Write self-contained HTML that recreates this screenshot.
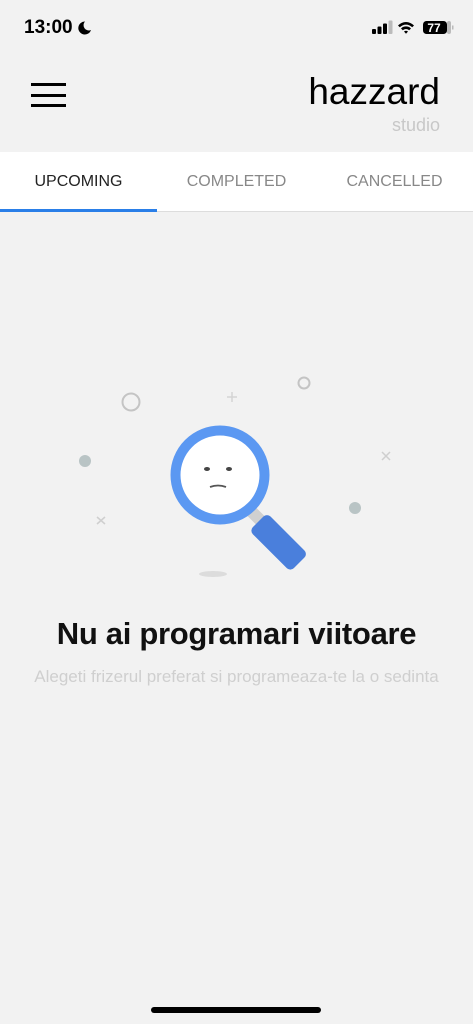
<!DOCTYPE html>
<html><head><meta charset="utf-8"><style>
*{margin:0;padding:0;box-sizing:border-box}
body{width:473px;height:1024px;background:#f2f2f2;font-family:"Liberation Sans",sans-serif;position:relative;overflow:hidden}
.a{position:absolute}
</style></head><body>
<div class="a" style="left:24px;top:17px;font-size:19px;font-weight:bold;color:#000">13:00</div>
<svg class="a" style="left:76px;top:20px" width="16" height="16" viewBox="0 0 16 16"><path d="M9 1.5A6.5 6.5 0 1 0 15 10 5.3 5.3 0 0 1 9 1.5z" fill="#000"/></svg>
<svg class="a" style="left:370px;top:18px" width="90" height="20" viewBox="0 0 90 20">
<rect x="2" y="11" width="4" height="5" rx="1" fill="#000"/><rect x="7.5" y="8.5" width="4" height="7.5" rx="1" fill="#000"/><rect x="13" y="5.5" width="4" height="10.5" rx="1" fill="#000"/><rect x="18.5" y="2.5" width="4" height="13.5" rx="1" fill="#bbb"/>
<path d="M28 7.5a11 11 0 0 1 16 0l-1.8 1.8a8.5 8.5 0 0 0-12.4 0z M31 10.5a7 7 0 0 1 10 0l-1.8 1.8a4.5 4.5 0 0 0-6.4 0z M34 13.5a3 3 0 0 1 4 0l-2 2.2z" fill="#000"/>
<rect x="53" y="3" width="24" height="13" rx="3.5" fill="#000"/><rect x="77" y="3" width="4" height="13" rx="2" fill="#bbb"/><rect x="82" y="7.5" width="1.5" height="4" fill="#bbb"/>
<text x="64" y="14" font-size="12" font-weight="bold" fill="#fff" text-anchor="middle" font-family="Liberation Sans">77</text>
</svg>
<div class="a" style="left:31px;top:83px;width:35px;height:3px;background:#000"></div>
<div class="a" style="left:31px;top:94px;width:35px;height:3px;background:#000"></div>
<div class="a" style="left:31px;top:104px;width:35px;height:3px;background:#000"></div>
<div class="a" style="right:33px;top:71px;font-size:37px;color:#000;line-height:42px">hazzard</div>
<div class="a" style="right:33px;top:115px;font-size:18px;color:#c8c8c8">studio</div>
<div class="a" style="left:0;top:152px;width:473px;height:60px;background:#fff;border-bottom:1px solid #ddd"></div>
<div class="a" style="left:0;top:173px;width:157px;text-align:center;font-size:16px;color:#222">UPCOMING</div>
<div class="a" style="left:158px;top:173px;width:157px;text-align:center;font-size:16px;color:#888">COMPLETED</div>
<div class="a" style="left:316px;top:173px;width:157px;text-align:center;font-size:16px;color:#888">CANCELLED</div>
<div class="a" style="left:0;top:209px;width:157px;height:3px;background:#2a7fe8"></div>
<svg class="a" style="left:0;top:360px" width="473" height="230" viewBox="0 360 473 230">
<circle cx="131" cy="402" r="8.5" fill="none" stroke="#c4c4c4" stroke-width="2"/>
<circle cx="304" cy="383" r="5.5" fill="none" stroke="#c4c4c4" stroke-width="2"/>
<path d="M232 392v10M227 397h10" stroke="#d4d4d4" stroke-width="1.5"/>
<path d="M382 452l8 8M390 452l-8 8" stroke="#cfcfcf" stroke-width="1.5"/>
<path d="M97 517l8 7M105 517l-8 7" stroke="#cfcfcf" stroke-width="1.5"/>
<circle cx="85" cy="461" r="6" fill="#b9c4c5"/>
<circle cx="355" cy="508" r="6" fill="#b9c4c5"/>
<ellipse cx="213" cy="574" rx="14" ry="3" fill="#dcdcdc"/>
<path d="M250 510l12 12" stroke="#d0d0d0" stroke-width="12"/>
<rect x="250" y="530" width="58" height="25" rx="5" fill="#4a7fdc" transform="rotate(45 279 542)"/>
<circle cx="220" cy="475" r="44.5" fill="#fff" stroke="#5b98f2" stroke-width="10"/>
<ellipse cx="207" cy="469" rx="3" ry="2" fill="#444"/>
<ellipse cx="229" cy="469" rx="3" ry="2" fill="#444"/>
<path d="M210 487q8-3 16 0" stroke="#555" stroke-width="1.8" fill="none"/>
</svg>
<div class="a" style="left:0;top:616px;width:473px;text-align:center;font-size:31px;font-weight:bold;color:#111;letter-spacing:-0.3px">Nu ai programari viitoare</div>
<div class="a" style="left:0;top:667px;width:473px;text-align:center;font-size:17px;color:#cfcfcf">Alegeti frizerul preferat si programeaza-te la o sedinta</div>
<div class="a" style="left:151px;top:1007px;width:170px;height:6px;border-radius:3px;background:#000"></div>
</body></html>
